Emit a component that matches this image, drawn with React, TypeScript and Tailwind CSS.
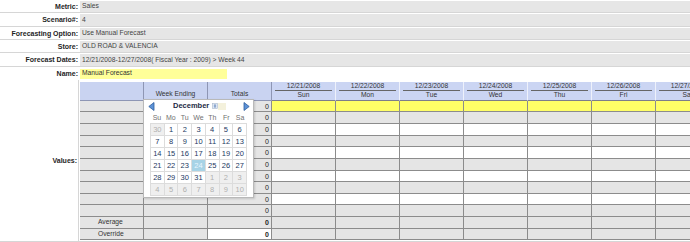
import React from 'react';

const INFO: [string, string][] = [
  ['Metric:', 'Sales'],
  ['Scenario#:', '4'],
  ['Forecasting Option:', 'Use Manual Forecast'],
  ['Store:', 'OLD ROAD & VALENCIA'],
  ['Forecast Dates:', '12/21/2008-12/27/2008( Fiscal Year : 2009) > Week 44'],
];
const INFO_H = ['h-[13px]', 'h-[14px]', 'h-[13px]', 'h-[13px]', 'h-[14px]'];

const DAYS = [
  { date: '12/21/2008', name: 'Sun' },
  { date: '12/22/2008', name: 'Mon' },
  { date: '12/23/2008', name: 'Tue' },
  { date: '12/24/2008', name: 'Wed' },
  { date: '12/25/2008', name: 'Thu' },
  { date: '12/26/2008', name: 'Fri' },
  { date: '12/27/2008', name: 'Sat' },
];

// 10 value rows, then Average and Override
const ROWS = [...Array(10).fill(''), 'Average', 'Override'];
const ROW_H = [
  'h-[11px]', 'h-[12px]', 'h-[12px]', 'h-[11px]', 'h-[12px]', 'h-[12px]',
  'h-[11px]', 'h-[12px]', 'h-[11px]', 'h-[12px]', 'h-[12px]', 'h-[11px]',
];

const WEEKS = [
  [30, 1, 2, 3, 4, 5, 6],
  [7, 8, 9, 10, 11, 12, 13],
  [14, 15, 16, 17, 18, 19, 20],
  [21, 22, 23, 24, 25, 26, 27],
  [28, 29, 30, 31, 1, 2, 3],
  [4, 5, 6, 7, 8, 9, 10],
];

function NavArrow({ dir }: { dir: 'left' | 'right' }) {
  return (
    <svg width="7" height="9" viewBox="0 0 7 9">
      {dir === 'left' ? (
        <polygon points="6,0.5 6,8.5 0.8,4.5" fill="#5d92d6" stroke="#2c5d9e" strokeWidth="0.8" />
      ) : (
        <polygon points="1,0.5 1,8.5 6.2,4.5" fill="#5d92d6" stroke="#2c5d9e" strokeWidth="0.8" />
      )}
    </svg>
  );
}

function Calendar() {
  return (
    <div className="absolute left-[64px] top-[19px] w-[111px] h-[99px] bg-white border border-[#b9b9b9] shadow-[1px_1px_2px_rgba(0,0,0,0.15)]">
      {/* month header */}
      <div className="flex items-center h-[12px] pl-[4px] pr-[3px]">
        <NavArrow dir="left" />
        <span className="ml-[18px] text-[7.5px] font-bold text-[#1d2a44] leading-none">December</span>
        <svg className="ml-[3px]" width="6" height="6" viewBox="0 0 6 6">
          <rect x="0.5" y="0.5" width="5" height="5" fill="#dfe8f4" stroke="#a7b8cc" strokeWidth="0.6" />
          <polygon points="3,1.2 4.3,2.6 1.7,2.6" fill="#3a66a8" />
          <polygon points="3,4.8 4.3,3.4 1.7,3.4" fill="#3a66a8" />
        </svg>
        <div className="w-[8px] h-[7px] bg-[#f4f1dc]" />
        <div className="flex-1" />
        <NavArrow dir="right" />
      </div>
      {/* weekdays */}
      <div className="ml-[6px] w-[97px] h-[10px] grid grid-cols-7 items-center text-[7px] leading-none text-[#707070]">
        {['Su', 'Mo', 'Tu', 'We', 'Th', 'Fr', 'Sa'].map((d) => (
          <span key={d} className="text-center">{d}</span>
        ))}
      </div>
      {/* dates */}
      <div className="ml-[6px] mt-[1px] w-[97px] grid grid-cols-7 gap-px bg-[#dcdcdc] border border-[#dcdcdc]">
        {WEEKS.map((week, w) =>
          week.map((day, i) => {
            const other = (w === 0 && day > 7) || (w === 4 && day < 7) || w === 5;
            const selected = w === 3 && day === 24;
            return (
              <div
                key={`${w}-${i}`}
                className={
                  'h-[11px] flex items-center justify-center text-[7.5px] leading-none ' +
                  (selected
                    ? 'bg-[#a7d3e6] text-[#eaf6ff]'
                    : other
                    ? 'bg-[#efefef] text-[#b0b0b0]'
                    : 'bg-white text-[#23395f]')
                }
              >
                {day}
              </div>
            );
          })
        )}
      </div>
    </div>
  );
}

export default function App() {
  return (
    <div className="w-[690px] h-[242px] overflow-hidden bg-white font-['Liberation_Sans',Arial,sans-serif] text-[#333]">
      {/* info rows */}
      {INFO.map(([label, value], idx) => (
        <div key={label} className={`flex ${INFO_H[idx]} border-b border-[#d6d6d6]`}>
          <div className="w-[79px] flex items-center justify-end pr-[1px] text-[7px] font-bold text-[#1e1e1e] leading-none whitespace-nowrap">
            {label}
          </div>
          <div className="flex-1 ml-[1px] mt-px bg-[#e6e6e6] flex items-center pl-[2px] text-[6.7px] text-[#444] leading-none whitespace-nowrap">
            {value}
          </div>
        </div>
      ))}
      <div className="flex h-[13px]">
        <div className="w-[79px] flex items-center justify-end pr-[1px] text-[7px] font-bold text-[#1e1e1e] leading-none">
          Name:
        </div>
        <div className="flex-1 ml-[1px] flex items-center">
          <div className="w-[147px] h-[10px] bg-[#ffff99] flex items-center pl-[2px] text-[6.7px] text-[#333] leading-none">
            Manual Forecast
          </div>
        </div>
      </div>

      {/* values grid */}
      <div className="flex h-[162px] border-b border-[#d6d6d6]">
        <div className="w-[79px] border-r border-[#d6d6d6] flex items-center justify-end pr-[1px] text-[7px] font-bold text-[#1e1e1e] leading-none">
          Values:
        </div>
        <div className="relative flex-1 pt-[2px] pl-[1px] overflow-hidden">
          <div className="flex h-[19px] w-max">
            <div className="w-[64px] bg-[#c9d3f1] border-r border-b border-[#8e96b4]" />
            <div className="w-[64px] bg-[#c9d3f1] border-r border-b border-[#8e96b4] flex items-end justify-center pb-[2px] text-[6.7px] leading-none text-[#333]">
              Week Ending
            </div>
            <div className="w-[64px] bg-[#c9d3f1] border-r border-b border-[#8e96b4] flex items-end justify-center pb-[2px] text-[6.7px] leading-none text-[#333]">
              Totals
            </div>
            {DAYS.map((d) => (
              <div key={d.date} className="w-[64px] flex flex-col bg-[#cbd5f3] border-r border-[#eef1fb] border-b border-b-[#7d7d8a]">
                <div className="h-[9px] mx-[3px] border-b border-[#666] flex items-center justify-center text-[6.7px] leading-none text-[#333]">
                  {d.date}
                </div>
                <div className="flex-1 flex items-center justify-center text-[6.7px] leading-none text-[#333]">
                  {d.name}
                </div>
              </div>
            ))}
          </div>
          {ROWS.map((label, r) => {
            const summary = label !== '';
            const dayBg = r === 0 ? 'bg-[#ffff66]' : summary || r % 2 === 1 ? 'bg-[#e5e5e5]' : 'bg-white';
            return (
              <div key={r} className={`flex w-max ${ROW_H[r]}`}>
                <div className="w-[64px] bg-[#e5e5e5] border-r border-b border-[#8c8c8c] flex items-center pl-[18px] text-[6.7px] leading-none text-[#333]">
                  {label}
                </div>
                <div className="w-[64px] bg-[#e5e5e5] border-r border-b border-[#8c8c8c]" />
                <div
                  className={`w-[64px] border-r border-b border-[#8c8c8c] flex items-center justify-end pr-[2px] text-[7px] leading-none text-[#222] ${
                    label === 'Override' ? 'bg-white' : 'bg-[#e5e5e5]'
                  } ${summary ? 'font-bold' : ''}`}
                >
                  0
                </div>
                {DAYS.map((d) => (
                  <div key={d.date} className={`w-[64px] ${dayBg} border-r border-b border-[#8c8c8c]`} />
                ))}
              </div>
            );
          })}
          <Calendar />
        </div>
      </div>
    </div>
  );
}
